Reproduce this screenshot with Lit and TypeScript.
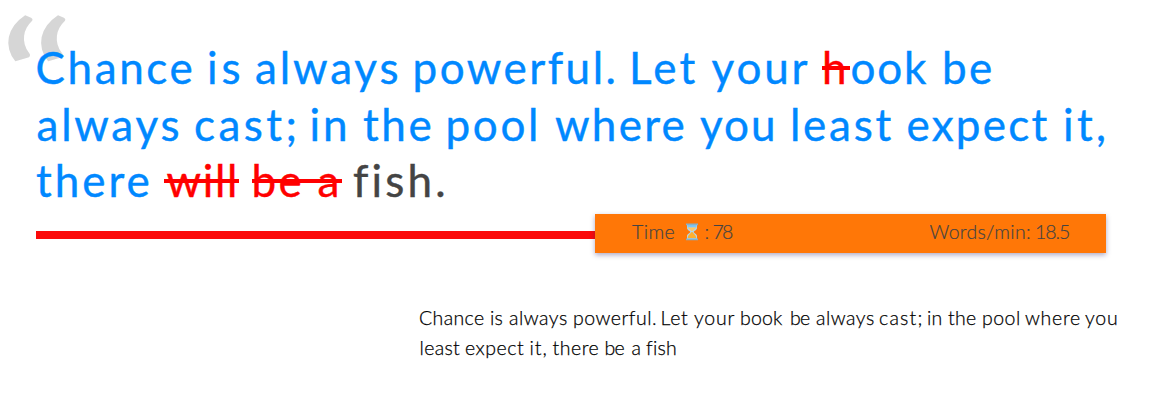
import { LitElement, html, css, svg } from "lit";
import { customElement, property } from "lit/decorators.js";
import { styleMap } from "lit/directives/style-map.js";

type Word = [text: string, start: number, end: number, kind?: string];

const QUOTE: Word[][] = [
  [
    ["Chance", 37.5, 191.5], ["is", 209, 239.5], ["always", 256, 397.5], ["powerful.", 415.5, 613.5],
    ["Let", 633, 695.5], ["your", 711.5, 807.5], ["h", 825, 846, "wrong"], ["ook", 851.5, 927], ["be", 945, 991],
  ],
  [
    ["always", 37.5, 178.5], ["cast;", 195, 294.5], ["in", 311.5, 345], ["the", 363, 430.5], ["pool", 448.5, 536],
    ["where", 555, 683.5], ["you", 700, 773], ["least", 793, 891.5], ["expect", 907.5, 1047.5], ["it,", 1065, 1104],
  ],
  [
    ["there", 36, 148.5], ["will", 166.5, 235, "wrong"], ["be a", 254.5, 337.5, "wrong"], ["fish.", 354, 442.5, "rest"],
  ],
];

const TYPED: Word[][] = [
  [
    ["Chance", 420, 484], ["is", 491, 502.5], ["always", 509, 567], ["powerful.", 574, 656], ["Let", 662.5, 688],
    ["your", 694, 734.5], ["book", 741, 783], ["be", 791, 810], ["always", 816, 874], ["cast;", 880, 921.5],
    ["in", 928, 941.5], ["the", 948, 976], ["pool", 983, 1019], ["where", 1025, 1080], ["you", 1085, 1117],
  ],
  [
    ["least", 420.5, 460], ["expect", 466, 524], ["it,", 530.5, 546.5], ["there", 552.5, 598.5], ["be", 605.5, 624.5],
    ["a", 631.5, 640], ["fish", 646, 675.5],
  ],
];

const STATS: Word[] = [
  ["Time", 632, 674.5], ["⌛", 685.5, 698, "icon"], [":", 705.5, 708], ["78", 713.5, 733],
  ["Words/min:", 929.5, 1030], ["18.5", 1036, 1069],
];

const pen = document.createElement("canvas").getContext("2d")!;

@customElement("text-line")
export class TextLine extends LitElement {
  static styles = css`
    :host { display: flex; white-space: pre; }
    .word { display: block; flex: none; position: relative; }
    .wrong { color: #ff0000; }
    .wrong::after {
      content: ""; position: absolute; height: 4px; top: 27px;
      left: -3px; right: -4px; background: #ff0000;
    }
    .rest { color: #444; }
    .icon { display: flex; align-items: center; }
    svg { display: block; width: 12px; height: 18px; }
  `;

  @property({ attribute: false }) words: Word[] = [];
  @property() font = "";
  @property({ type: Number }) origin = 0;

  private hourglass() {
    return html`<svg viewBox="0 0 12 18" role="img" aria-label="hourglass">${svg`
      <path d="M1 2h10v3c0 2-3.200 3-3.200 4s3.200 2 3.200 4v3H1v-3c0-2 3.200-3 3.200-4S1 7 1 5z" fill="#b5d6e6"/>
      <path d="M1.500 2h9v2.500H1.500z" fill="#7cc8fb"/>
      <path d="M1.800 4.500h8.400C9.500 6 7.500 6.600 6.600 8H5.400C4.500 6.600 2.500 6 1.800 4.500z" fill="#ffc766"/>
      <path d="M5.500 9h1c.2 1.400 3.600 2.500 3.800 6H1.700C1.900 11.500 5.300 10.400 5.500 9z" fill="#ffb02e"/>
      <path d="M0 .5h12v1.700H0zM0 15.500h12v1.700H0z" fill="#86b0c8"/>`}</svg>`;
  }

  render() {
    pen.font = this.font;
    let cursor = this.origin;
    return this.words.map(([text, start, end, kind]) => {
      const ink = pen.measureText(text);
      const natural = ink.actualBoundingBoxRight + ink.actualBoundingBoxLeft;
      const spacing = text.length > 1 ? (end - start - natural) / (text.length - 1) : 0;
      const style = {
        width: `${end - start}px`,
        marginLeft: `${start - cursor}px`,
        textIndent: `${ink.actualBoundingBoxLeft}px`,
        letterSpacing: `${spacing}px`,
      };
      cursor = end;
      return html`<span class="word ${kind ?? ""}" style=${styleMap(style)}>${kind === "icon" ? this.hourglass() : text}</span>`;
    });
  }
}

@customElement("app-root")
export class AppRoot extends LitElement {
  static styles = css`
    :host {
      display: block; height: 405px; overflow: hidden; background: #fff;
      font-family: Lato, "Open Sans", sans-serif;
    }
    .page { position: relative; padding: 39px 36px 0; }
    .mark {
      position: absolute; left: -3px; top: 0; color: #d6d6d6;
      font-size: 160px; line-height: 150px; transform: scaleX(1.350); transform-origin: 0 0;
    }
    .quote {
      position: relative; font-size: 44px; line-height: 56.500px; color: #0088ff; height: 175px;
      -webkit-text-stroke: 0.400px currentColor;
    }
    .bar { display: flex; align-items: flex-start; height: 39px; margin-right: 34px; }
    .progress { width: 559px; height: 8px; margin-top: 17px; background: #fb0a0a; }
    .stats {
      flex: none; width: 511px; height: 39px; background: #ff7707; color: #444;
      box-shadow: 0 2px 5px rgba(50, 40, 110, 0.400);
      font-size: 19.500px; font-weight: 300; line-height: 36px; -webkit-text-stroke: 0.200px currentColor;
    }
    .typed {
      margin: 50px 0 0 383px; font-size: 19.500px; font-weight: 300; line-height: 30px; color: #000;
      -webkit-text-stroke: 0.250px currentColor;
    }
  `;

  render() {
    return html`
      <div class="page">
        <div class="mark">“</div>
        <div class="quote">
          ${QUOTE.map((line) => html`<text-line .words=${line} font="400 44px Lato" origin="36"></text-line>`)}
        </div>
        <div class="bar">
          <div class="progress"></div>
          <div class="stats"><text-line .words=${STATS} font="300 19.5px Lato" origin="595"></text-line></div>
        </div>
        <div class="typed">
          ${TYPED.map((line) => html`<text-line .words=${line} font="300 19.5px Lato" origin="419"></text-line>`)}
        </div>
      </div>
    `;
  }
}
